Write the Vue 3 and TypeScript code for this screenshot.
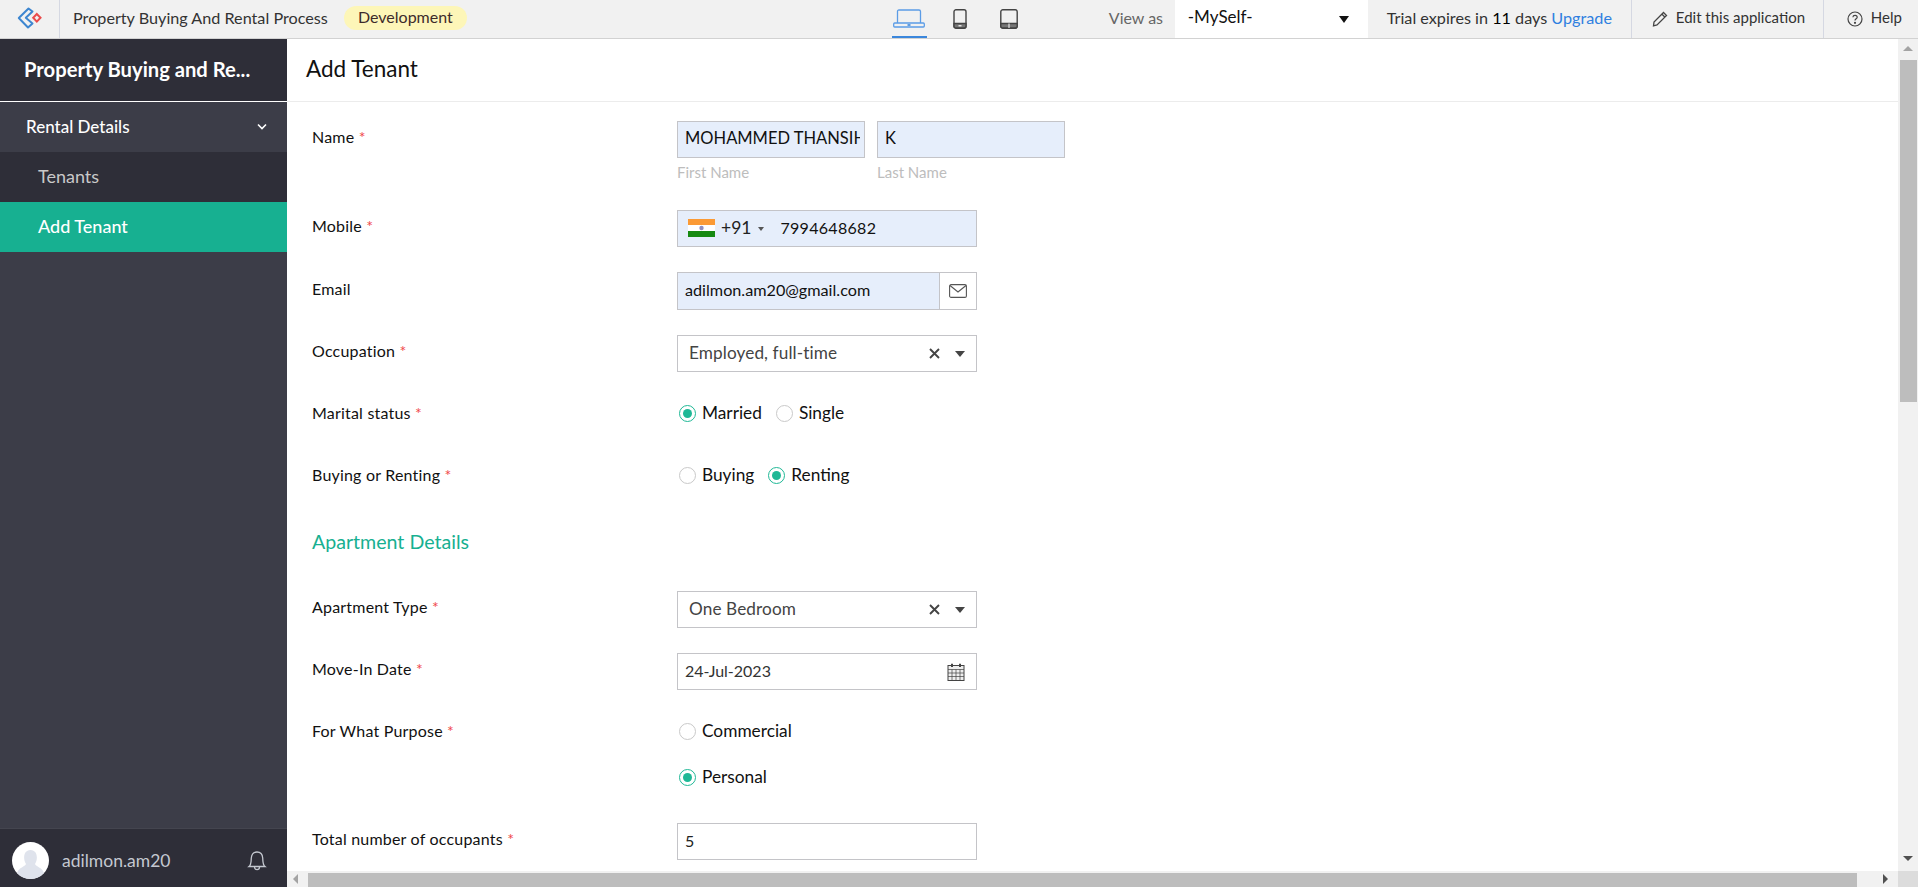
<template>
  <div class="page">
    <!-- Top bar -->
    <header class="topbar">
      <div class="logo-cell">
        <svg width="26" height="24" viewBox="0 0 26 24" fill="none">
          <path d="M11.5 1.5 L1.8 11 L11 20.5 L15.5 16.5 L8.8 10.8 L15.5 4.5 Z" stroke="#3d86d0" stroke-width="2" stroke-linejoin="round" />
          <path d="M19.8 7 L23.5 10.8 L19.8 14.6 L16.2 10.8 Z" stroke="#ea4b4b" stroke-width="2" />
        </svg>
      </div>
      <span class="app-name">Property Buying And Rental Process</span>
      <span class="env-pill">Development</span>

      <div class="devices">
        <div class="device active">
          <svg width="32" height="20" viewBox="0 0 32 20" fill="none" stroke="#5b9ce6" stroke-width="1.3">
            <path d="M4.5 14 V2.5 Q4.5 1 6 1 H26 Q27.5 1 27.5 2.5 V14" />
            <rect x="0.7" y="14" width="30.6" height="4" rx="1" />
            <path d="M14.5 16 h3" stroke="#3b87dc" stroke-width="1.6" />
          </svg>
        </div>
        <div class="device phone">
          <svg width="14" height="20" viewBox="0 0 14 20" fill="none" stroke="#444" stroke-width="1.4">
            <rect x="1" y="0.8" width="12" height="18.4" rx="2" />
            <path d="M1 14.5 H13 V17 Q13 19 11 19 H3 Q1 19 1 17 Z" fill="#777" />
            <path d="M5.5 16.8 h3" stroke="#fff" stroke-width="1.2" />
          </svg>
        </div>
        <div class="device tablet">
          <svg width="18" height="20" viewBox="0 0 18 20" fill="none" stroke="#444" stroke-width="1.4">
            <rect x="0.8" y="0.8" width="16.4" height="18.4" rx="2" />
            <path d="M0.8 14.5 H17.2 V17 Q17.2 19 15.2 19 H2.8 Q0.8 19 0.8 17 Z" fill="#777" />
            <path d="M9 14.5 V19" stroke="#fff" stroke-width="1" />
          </svg>
        </div>
      </div>

      <span class="view-as">View as</span>
      <div class="view-select">
        <span>-MySelf-</span>
        <i class="view-caret"></i>
      </div>
      <div class="trial">Trial expires in <b>11</b> days <a>Upgrade</a></div>
      <div class="top-action edit">
        <svg width="16" height="16" viewBox="0 0 16 16" fill="none" stroke="#444" stroke-width="1.3">
          <path d="M11.5 1.5 L14.5 4.5 L5 14 L1.5 14.8 L2 11 Z" />
          <path d="M10 3.2 L12.8 6" />
        </svg>
        <span>Edit this application</span>
      </div>
      <div class="top-action help">
        <svg width="16" height="16" viewBox="0 0 16 16" fill="none" stroke="#444" stroke-width="1.2">
          <circle cx="8" cy="8" r="7" />
          <path d="M5.9 6.2 C6 3.7 10.2 3.8 10.2 6.2 C10.2 7.8 8 7.8 8 9.6" />
          <circle cx="8" cy="11.8" r="0.5" fill="#444" />
        </svg>
        <span>Help</span>
      </div>
    </header>

    <div class="body">
      <!-- Sidebar -->
      <aside class="sidebar">
        <div class="side-title">Property Buying and Re...</div>
        <div class="side-group">
          <span>Rental Details</span>
          <svg width="12" height="8" viewBox="0 0 12 8" fill="none" stroke="#fff" stroke-width="1.6">
            <polyline points="2 1.5 6 5.5 10 1.5" />
          </svg>
        </div>
        <div class="side-item">Tenants</div>
        <div class="side-item selected">Add Tenant</div>
        <div class="side-spacer"></div>
        <div class="side-user">
          <div class="avatar">
            <svg width="37" height="37" viewBox="0 0 37 37">
              <circle cx="18.5" cy="18.5" r="18.5" fill="#fff" />
              <path d="M5 31 C7 25 13 25 14 22 C11 18 11 8 18.5 8 C26 8 26 18 23 22 C24 25 30 25 32 31 C25 39 12 39 5 31 Z" fill="#dfe3ec" />
            </svg>
          </div>
          <span class="user-name">adilmon.am20</span>
          <svg class="bell" width="20" height="22" viewBox="0 0 20 22" fill="none" stroke="#c4c8d0" stroke-width="1.3">
            <path d="M2 16.5 C4.5 14.5 4 11 4.3 8 C4.6 4 7 2 10 2 C13 2 15.4 4 15.7 8 C16 11 15.5 14.5 18 16.5 Z" />
            <path d="M7.5 17 C7.5 20.5 12.5 20.5 12.5 17" />
          </svg>
        </div>
      </aside>

      <!-- Main -->
      <main class="main">
        <div class="main-row">
          <div class="content">
            <h1 class="page-title">Add Tenant</h1>
            <form class="form" @submit.prevent>
              <div class="row name-row">
                <label class="lbl">Name <em>*</em></label>
                <div class="pair">
                  <div class="sub">
                    <div class="field filled half"><span class="clip">{{ firstName }}</span></div>
                    <small>First Name</small>
                  </div>
                  <div class="sub">
                    <div class="field filled half"><span class="clip">K</span></div>
                    <small>Last Name</small>
                  </div>
                </div>
              </div>

              <div class="row">
                <label class="lbl">Mobile <em>*</em></label>
                <div class="field filled wide phone-field">
                  <svg width="27" height="18" viewBox="0 0 27 18">
                    <rect width="27" height="6" fill="#fb9a35" />
                    <rect y="6" width="27" height="6" fill="#fff" />
                    <rect y="12" width="27" height="6" fill="#178a12" />
                    <circle cx="13.5" cy="9" r="2.2" fill="#8f8fc0" />
                  </svg>
                  <span class="dial">+91</span>
                  <i class="mini-caret"></i>
                  <span class="phone-no">7994648682</span>
                </div>
              </div>

              <div class="row">
                <label class="lbl email-lbl">Email</label>
                <div class="email-box">
                  <span class="email-text"><span>adilmon.am20@gmail.com</span></span>
                  <span class="email-btn">
                    <svg width="18" height="14" viewBox="0 0 18 14" fill="none" stroke="#555" stroke-width="1.1">
                      <rect x="0.6" y="0.6" width="16.8" height="12.8" rx="1.5" />
                      <path d="M1 1.5 L9 8 L17 1.5" />
                    </svg>
                  </span>
                </div>
              </div>

              <div class="row">
                <label class="lbl">Occupation <em>*</em></label>
                <div class="field wide select">
                  <span>Employed, full-time</span>
                  <svg class="clear" width="11" height="11" viewBox="0 0 11 11" stroke="#444" stroke-width="1.9">
                    <path d="M1 1 L10 10 M10 1 L1 10" />
                  </svg>
                  <i class="caret"></i>
                </div>
              </div>

              <div class="row radio-row">
                <label class="lbl">Marital status <em>*</em></label>
                <div class="radios">
                  <span class="radio on"></span><span class="r-text">Married</span>
                  <span class="radio"></span><span class="r-text">Single</span>
                </div>
              </div>

              <div class="row radio-row">
                <label class="lbl">Buying or Renting <em>*</em></label>
                <div class="radios">
                  <span class="radio"></span><span class="r-text">Buying</span>
                  <span class="radio on"></span><span class="r-text">Renting</span>
                </div>
              </div>

              <h2 class="section">Apartment Details</h2>

              <div class="row">
                <label class="lbl">Apartment Type <em>*</em></label>
                <div class="field wide select">
                  <span>One Bedroom</span>
                  <svg class="clear" width="11" height="11" viewBox="0 0 11 11" stroke="#444" stroke-width="1.9">
                    <path d="M1 1 L10 10 M10 1 L1 10" />
                  </svg>
                  <i class="caret"></i>
                </div>
              </div>

              <div class="row">
                <label class="lbl">Move-In Date <em>*</em></label>
                <div class="field wide date">
                  <span>24-Jul-2023</span>
                  <svg width="18" height="18" viewBox="0 0 18 18" fill="none" stroke="#444" stroke-width="1">
                    <rect x="1" y="2.5" width="16" height="15" fill="#eee" />
                    <path d="M1 6.5 H17 M1 10 H17 M1 13.5 H17 M5 6.5 V17.5 M9 6.5 V17.5 M13 6.5 V17.5" stroke-width="0.7" />
                    <path d="M5 0.8 V4 M13 0.8 V4" stroke-width="2" />
                  </svg>
                </div>
              </div>

              <div class="row purpose-row">
                <label class="lbl">For What Purpose <em>*</em></label>
                <div class="radio-stack">
                  <div class="radios"><span class="radio"></span><span class="r-text">Commercial</span></div>
                  <div class="radios"><span class="radio on"></span><span class="r-text">Personal</span></div>
                </div>
              </div>

              <div class="row">
                <label class="lbl">Total number of occupants <em>*</em></label>
                <div class="field wide plain"><span>5</span></div>
              </div>
            </form>
          </div>

          <div class="vbar">
            <i class="arrow up"></i>
            <div class="vthumb"></div>
            <i class="arrow down"></i>
          </div>
        </div>

        <div class="hbar">
          <i class="arrow left"></i>
          <div class="hthumb"></div>
          <i class="arrow right"></i>
          <div class="corner"></div>
        </div>
      </main>
    </div>
  </div>
</template>

<script setup lang="ts">
const firstName = 'MOHAMMED THANSIH'
</script>

<style>
html,
body {
  margin: 0;
  overflow: hidden;
}
</style>

<style scoped>
.page {
  width: 1918px;
  height: 887px;
  display: flex;
  flex-direction: column;
  font-family: Lato, 'Liberation Sans', sans-serif;
  color: #111;
  overflow: hidden;
}

/* Top bar */
.topbar {
  height: 38px;
  flex-shrink: 0;
  display: flex;
  align-items: center;
  background: #f1f1f1;
  border-bottom: 1px solid #d2d2d2;
  font-size: 16px;
  color: #333;
}

.logo-cell {
  width: 59px;
  height: 100%;
  box-sizing: content-box;
  border-right: 1px solid #d5d8e2;
  display: flex;
  align-items: center;
  justify-content: center;
}

.logo-cell svg {
  margin-left: 1px;
}

.app-name {
  margin: 0 0 4px 13px;
  width: 271px;
  font-size: 16.2px;
  white-space: nowrap;
}

.env-pill {
  margin: 0 0 2px 0;
  height: 24px;
  line-height: 21px;
  padding: 0 14px;
  border-radius: 12px;
  background: #fdf6b8;
  color: #3d2b2b;
}

.devices {
  margin-left: 425px;
  display: flex;
  height: 100%;
  align-items: flex-start;
}

.device {
  height: 100%;
  box-sizing: border-box;
  padding-top: 9px;
}

.device.active {
  width: 35px;
  display: flex;
  justify-content: center;
  color: #3b87dc;
  border-bottom: 2px solid #3b87dc;
  height: 38px;
}

.device.phone {
  margin-left: 26px;
}

.device.tablet {
  margin-left: 33px;
}

.view-as {
  margin: 0 0 4px 91px;
  width: 58px;
  color: #666;
  white-space: nowrap;
}

.view-select {
  margin-left: 8px;
  width: 193px;
  height: 100%;
  box-sizing: border-box;
  padding: 0 19px 5px 13px;
  background: #fff;
  display: flex;
  align-items: center;
  justify-content: space-between;
  font-size: 17px;
  color: #111;
}

.view-caret {
  width: 0;
  height: 0;
  margin-top: 5px;
  border-left: 5px solid transparent;
  border-right: 5px solid transparent;
  border-top: 7px solid #111;
}

.trial {
  margin: 0 0 4px 19px;
  width: 226px;
  font-size: 16.2px;
  white-space: nowrap;
  color: #333;
}

.trial b {
  font-weight: 400;
  color: #000;
}

.trial a {
  color: #2f7fe0;
}

.top-action {
  height: 100%;
  display: flex;
  align-items: center;
  gap: 8px;
  border-left: 1px solid #d5d8e2;
  font-size: 15px;
  white-space: nowrap;
}

.top-action span {
  margin-bottom: 4px;
}

.edit {
  margin-left: 18px;
  width: 192px;
  box-sizing: border-box;
  padding-left: 20px;
}

.help {
  flex: 1;
  padding-left: 23px;
}

/* Layout */
.body {
  flex: 1;
  min-height: 0;
  display: flex;
}

.sidebar {
  width: 287px;
  flex-shrink: 0;
  display: flex;
  flex-direction: column;
  background: #3c3d48;
  color: #fff;
}

.side-title {
  height: 63px;
  box-sizing: border-box;
  padding: 0 24px 3px;
  display: flex;
  align-items: center;
  background: #2e2e38;
  border-bottom: 1px solid #fff;
  font-size: 20.2px;
  font-weight: 700;
  white-space: nowrap;
}

.side-group {
  height: 49px;
  margin-top: 1px;
  padding: 0 19px 2px 26px;
  box-sizing: border-box;
  display: flex;
  align-items: center;
  justify-content: space-between;
  font-size: 17px;
  font-weight: 500;
}

.side-item {
  height: 50px;
  box-sizing: border-box;
  padding: 0 0 2px 38px;
  display: flex;
  align-items: center;
  background: #2e2e38;
  color: #c9c9c9;
  font-size: 18px;
}

.side-item.selected {
  background: #17b091;
  color: #fff;
  font-weight: 500;
}

.side-spacer {
  flex: 1;
}

.side-user {
  height: 58px;
  padding-left: 12px;
  padding-right: 20px;
  display: flex;
  align-items: center;
  background: #2e2e38;
  border-top: 1px solid #44454f;
  color: #c4c8d0;
  font-size: 17.5px;
}

.avatar {
  width: 37px;
  height: 37px;
  margin-top: 4px;
}

.user-name {
  margin: 4px 0 0 13px;
  flex: 1;
}

.bell {
  margin-top: 6px;
}

.main {
  flex: 1;
  min-width: 0;
  display: flex;
  flex-direction: column;
}

.main-row {
  flex: 1;
  min-height: 0;
  display: flex;
}

.content {
  flex: 1;
  min-width: 0;
  overflow: hidden;
}

.page-title {
  margin: 0;
  height: 63px;
  box-sizing: border-box;
  padding: 0 0 4px 19px;
  display: flex;
  align-items: center;
  border-bottom: 1px solid #ececec;
  font-size: 22.5px;
  font-weight: 400;
  color: #111;
}

/* Form */
.form {
  padding: 19px 0 0 25px;
}

.row {
  display: flex;
  align-items: flex-start;
  margin-bottom: 25px;
}

.lbl {
  width: 365px;
  flex-shrink: 0;
  padding-top: 6px;
  font-size: 16px;
  letter-spacing: 0.2px;
  font-weight: 400;
  color: #111;
}

.email-lbl {
  padding-top: 7px;
}

.lbl em {
  font-style: normal;
  color: #f0474a;
}

.field {
  box-sizing: border-box;
  height: 37px;
  padding-bottom: 3px;
  border: 1px solid #c4c4c8;
  background: #fff;
  font-size: 16px;
  color: #222;
  display: flex;
  align-items: center;
}

.filled {
  background: #e6eefb;
}

.half {
  width: 188px;
  padding-left: 7px;
  padding-right: 4px;
  font-size: 16.5px;
  color: #111;
}

.clip {
  display: block;
  overflow: hidden;
  white-space: nowrap;
}

.wide {
  width: 300px;
}

.plain {
  padding-left: 7px;
  padding-right: 7px;
}

.pair {
  display: flex;
  gap: 12px;
}

.sub small {
  display: block;
  margin-top: 4px;
  font-size: 15px;
  line-height: 20px;
  color: #bdbdbd;
}

.name-row {
  margin-bottom: 28px;
}

.phone-field {
  padding-left: 10px;
  padding-bottom: 0;
}

.phone-field svg {
  margin-top: -1px;
}

.dial {
  margin: -2px 0 0 6px;
  font-size: 17.5px;
}

.mini-caret {
  margin-left: 7px;
  width: 0;
  height: 0;
  border-left: 3px solid transparent;
  border-right: 3px solid transparent;
  border-top: 4px solid #555;
}

.phone-no {
  margin: -2px 0 0 16px;
  letter-spacing: 0.3px;
  color: #111;
}

.email-box {
  width: 300px;
  height: 38px;
  box-sizing: border-box;
  border: 1px solid #c4c4c8;
  display: flex;
  font-size: 16.2px;
}

.email-text {
  flex: 1;
  padding: 0 0 3px 7px;
  display: flex;
  align-items: center;
  background: #e6eefb;
}

.email-btn {
  width: 36px;
  border-left: 1px solid #c4c4c8;
  display: flex;
  align-items: center;
  justify-content: center;
}

.select {
  padding-left: 11px;
  padding-right: 11px;
  font-size: 17.2px;
  letter-spacing: 0.1px;
  color: #444;
}

.select span {
  flex: 1;
}

.clear {
  margin-top: 3px;
}

.caret {
  margin: 3px 0 0 15px;
  width: 0;
  height: 0;
  border-left: 5px solid transparent;
  border-right: 5px solid transparent;
  border-top: 6px solid #444;
}

.date {
  justify-content: space-between;
  padding-left: 7px;
  padding-right: 11px;
  color: #333;
}

.date svg {
  margin-top: 3px;
}

.radio-row {
  height: 37px;
}

.radios {
  height: 37px;
  margin-top: -3px;
  display: flex;
  align-items: center;
  padding-left: 2px;
}

.radio {
  width: 15px;
  height: 15px;
  border: 1px solid #c9c9c9;
  border-radius: 50%;
  background: #fff;
  position: relative;
  margin-top: 2px;
}

.radio.on {
  border-color: #1fb896;
}

.radio.on::after {
  content: '';
  position: absolute;
  inset: 3px;
  border-radius: 50%;
  background: #1fb896;
}

.r-text {
  margin: -1px 14px 0 6px;
  font-size: 17.3px;
  color: #111;
}

.section {
  margin: 0 0 33px;
  padding-top: 5px;
  height: 32px;
  line-height: 32px;
  font-size: 19.6px;
  font-weight: 400;
  color: #17b091;
}

.radio-stack {
  display: flex;
  flex-direction: column;
  gap: 9px;
}

.radio-stack .radios + .radios {
  margin-top: 0;
}

.purpose-row {
  margin-bottom: 28px;
}

/* Fake scrollbars */
.vbar {
  width: 20px;
  flex-shrink: 0;
  background: #f1f1f1;
  display: flex;
  flex-direction: column;
  align-items: center;
  position: relative;
}

.vthumb {
  position: absolute;
  top: 21px;
  left: 2px;
  width: 17px;
  height: 342px;
  background: #bdbdbd;
}

.hbar {
  height: 16px;
  flex-shrink: 0;
  background: #f1f1f1;
  position: relative;
}

.hthumb {
  position: absolute;
  top: 2px;
  left: 21px;
  width: 1549px;
  height: 14px;
  background: #bdbdbd;
}

.corner {
  position: absolute;
  right: 0;
  top: 0;
  width: 20px;
  height: 16px;
  background: #dcdcdc;
}

.arrow {
  position: absolute;
  width: 0;
  height: 0;
}

.arrow.up {
  top: 7px;
  left: 5px;
  border-left: 5px solid transparent;
  border-right: 5px solid transparent;
  border-bottom: 5px solid #a3a3a3;
}

.arrow.down {
  bottom: 10px;
  left: 5px;
  border-left: 5px solid transparent;
  border-right: 5px solid transparent;
  border-top: 5px solid #505050;
}

.arrow.left {
  top: 3px;
  left: 6px;
  border-top: 5px solid transparent;
  border-bottom: 5px solid transparent;
  border-right: 5px solid #a3a3a3;
}

.arrow.right {
  top: 3px;
  right: 30px;
  border-top: 5px solid transparent;
  border-bottom: 5px solid transparent;
  border-left: 5px solid #505050;
}
</style>
